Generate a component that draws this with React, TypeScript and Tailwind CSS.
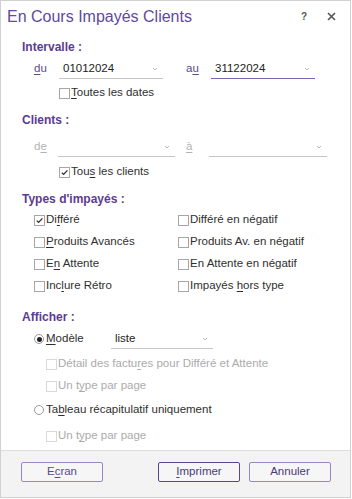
import React from 'react';

// --- Small controls ---
const Chevron = ({ className = '' }: { className?: string }) => (
    <svg className={className} width="6" height="4" viewBox="0 0 6 4"><path d="M1 1l2 2 2-2" fill="none" stroke="#b5b5b5" strokeWidth="0.9" /></svg>
);

const Box = ({ checked = false, disabled = false }: { checked?: boolean; disabled?: boolean }) => (
    <span className={`w-[11px] h-[11px] border flex items-center justify-center shrink-0 bg-white ${disabled ? 'border-[#d9d9d9]' : 'border-[#a6a6a6]'}`}>
        {checked && (
            <svg width="9" height="9" viewBox="0 0 9 9"><path d="M1.8 4.6l1.8 1.8 3.8-4" fill="none" stroke="#2d2d2d" strokeWidth="1.3" /></svg>
        )}
    </span>
);

const Radio = ({ checked = false }: { checked?: boolean }) => (
    <span className="w-[10px] h-[10px] rounded-full border border-[#9a9a9a] flex items-center justify-center shrink-0 bg-white">
        {checked && <span className="w-[5px] h-[5px] rounded-full bg-[#222]" />}
    </span>
);

const Combo = ({ value, focused = false, className = '' }: { value: string; focused?: boolean; className?: string }) => (
    <div className={`h-[20px] flex items-center justify-between pl-[4px] pr-[5px] border-b ${focused ? 'border-[#7b62b3]' : 'border-[#c6c6c6]'} ${className}`}>
        <span className="text-[#222]">{value}</span>
        <Chevron />
    </div>
);

type CheckProps = { label: React.ReactNode; checked?: boolean; disabled?: boolean };
const Check = ({ label, checked, disabled }: CheckProps) => (
    <div className="flex items-center gap-[1px]">
        <Box checked={checked} disabled={disabled} />
        <span className={disabled ? 'text-[#ababab]' : 'text-[#2f2f2f]'}>{label}</span>
    </div>
);

const U = ({ children }: { children: React.ReactNode }) => <span className="underline underline-offset-2">{children}</span>;

const Heading = ({ children, className = '' }: { children: React.ReactNode; className?: string }) => (
    <div className={`h-[20px] flex items-center pl-[21px] font-bold text-[12px] text-[#5b3c91] ${className}`}>{children}</div>
);

export default function App(): React.ReactElement {
    return (
        <div className="w-[351px] h-[498px] border border-[#d0d0d0] bg-white flex flex-col text-[11.5px] font-['Liberation_Sans',Arial,sans-serif]">
            <header className="h-[31px] flex items-center pl-[6px] pr-[14px] shrink-0">
                <h1 className="text-[16px] text-[#5f4a9c] flex-1">En Cours Impayés Clients</h1>
                <span className="text-[10px] font-bold text-[#555] mr-[20px]">?</span>
                <svg width="9" height="9" viewBox="0 0 9 9"><path d="M1 1l7 7M8 1l-7 7" stroke="#555" strokeWidth="1.6" /></svg>
            </header>

            <div className="flex-1 flex flex-col">
                {/* Intervalle */}
                <Heading className="mt-[5px]">Intervalle :</Heading>
                <div className="h-[20px] mt-[2px] flex items-center">
                    <span className="w-[58px] pl-[33px] text-[#5b4a8c]"><U>d</U>u</span>
                    <Combo value="01012024" className="w-[104px]" />
                    <span className="w-[48px] pl-[23px] text-[#5b4a8c]">a<U>u</U></span>
                    <Combo value="31122024" focused className="w-[104px]" />
                </div>
                <div className="h-[20px] mt-[4px] pl-[58px] flex items-center">
                    <Check label={<><U>T</U>outes les dates</>} />
                </div>

                {/* Clients */}
                <Heading className="mt-[7px]">Clients :</Heading>
                <div className="h-[20px] mt-[7px] flex items-center text-[#b3b3b3]">
                    <span className="w-[57px] pl-[33px]">d<U>e</U></span>
                    <Combo value="" className="w-[117px]" />
                    <span className="w-[34px] pl-[11px]"><U>à</U></span>
                    <Combo value="" className="w-[118px]" />
                </div>
                <div className="h-[20px] mt-[5px] pl-[58px] flex items-center">
                    <Check checked label={<>Tou<U>s</U> les clients</>} />
                </div>

                {/* Types */}
                <Heading className="mt-[7px] h-[18px]">Types d'impayés :</Heading>
                <div className="grid grid-cols-[144px_1fr] auto-rows-[22px] items-center pl-[33px]">
                    <Check checked label={<>Di<U>f</U>féré</>} />
                    <Check label="Différé en négatif" />
                    <Check label={<><U>P</U>roduits Avancés</>} />
                    <Check label="Produits Av. en négatif" />
                    <Check label={<>E<U>n</U> Attente</>} />
                    <Check label="En Attente en négatif" />
                    <Check label={<>Inc<U>l</U>ure Rétro</>} />
                    <Check label={<>Impayés <U>h</U>ors type</>} />
                </div>

                {/* Afficher */}
                <Heading className="mt-[10px]">Afficher :</Heading>
                <div className="h-[20px] mt-[2px] pl-[33px] flex items-center">
                    <div className="w-[77px] flex items-center gap-[2px]">
                        <Radio checked />
                        <span className="text-[#2f2f2f]"><U>M</U>odèle</span>
                    </div>
                    <Combo value="liste" className="w-[102px]" />
                </div>
                <div className="h-[20px] mt-[5px] pl-[45px] flex items-center">
                    <Check disabled label={<>Détail des factu<U>r</U>es pour Différé et Attente</>} />
                </div>
                <div className="h-[20px] mt-[2px] pl-[45px] flex items-center">
                    <Check disabled label={<>Un t<U>y</U>pe par page</>} />
                </div>
                <div className="h-[20px] mt-[4px] pl-[33px] flex items-center gap-[2px]">
                    <Radio />
                    <span className="text-[#2f2f2f]">Ta<U>b</U>leau récapitulatif uniquement</span>
                </div>
                <div className="h-[20px] mt-[6px] pl-[45px] flex items-center">
                    <Check disabled label={<>Un t<U>y</U>pe par page</>} />
                </div>
            </div>

            <footer className="h-[47px] shrink-0 border-t border-[#dcdcdc] bg-[#f3f3f3] flex items-start pt-[11px] pl-[20px]">
                <button className="w-[82px] h-[20px] rounded-[2px] border border-[#9a86c2] bg-[#f6f6f6] text-[#5b4a8c]">E<U>c</U>ran</button>
                <button className="w-[82px] h-[20px] ml-[55px] rounded-[2px] border-[1.5px] border-[#5d4493] bg-[#f6f6f6] text-[#4a3a7a]"><U>I</U>mprimer</button>
                <button className="w-[82px] h-[20px] ml-[9px] rounded-[2px] border border-[#9a86c2] bg-[#f6f6f6] text-[#4a3a7a]">Annuler</button>
            </footer>
        </div>
    );
}
